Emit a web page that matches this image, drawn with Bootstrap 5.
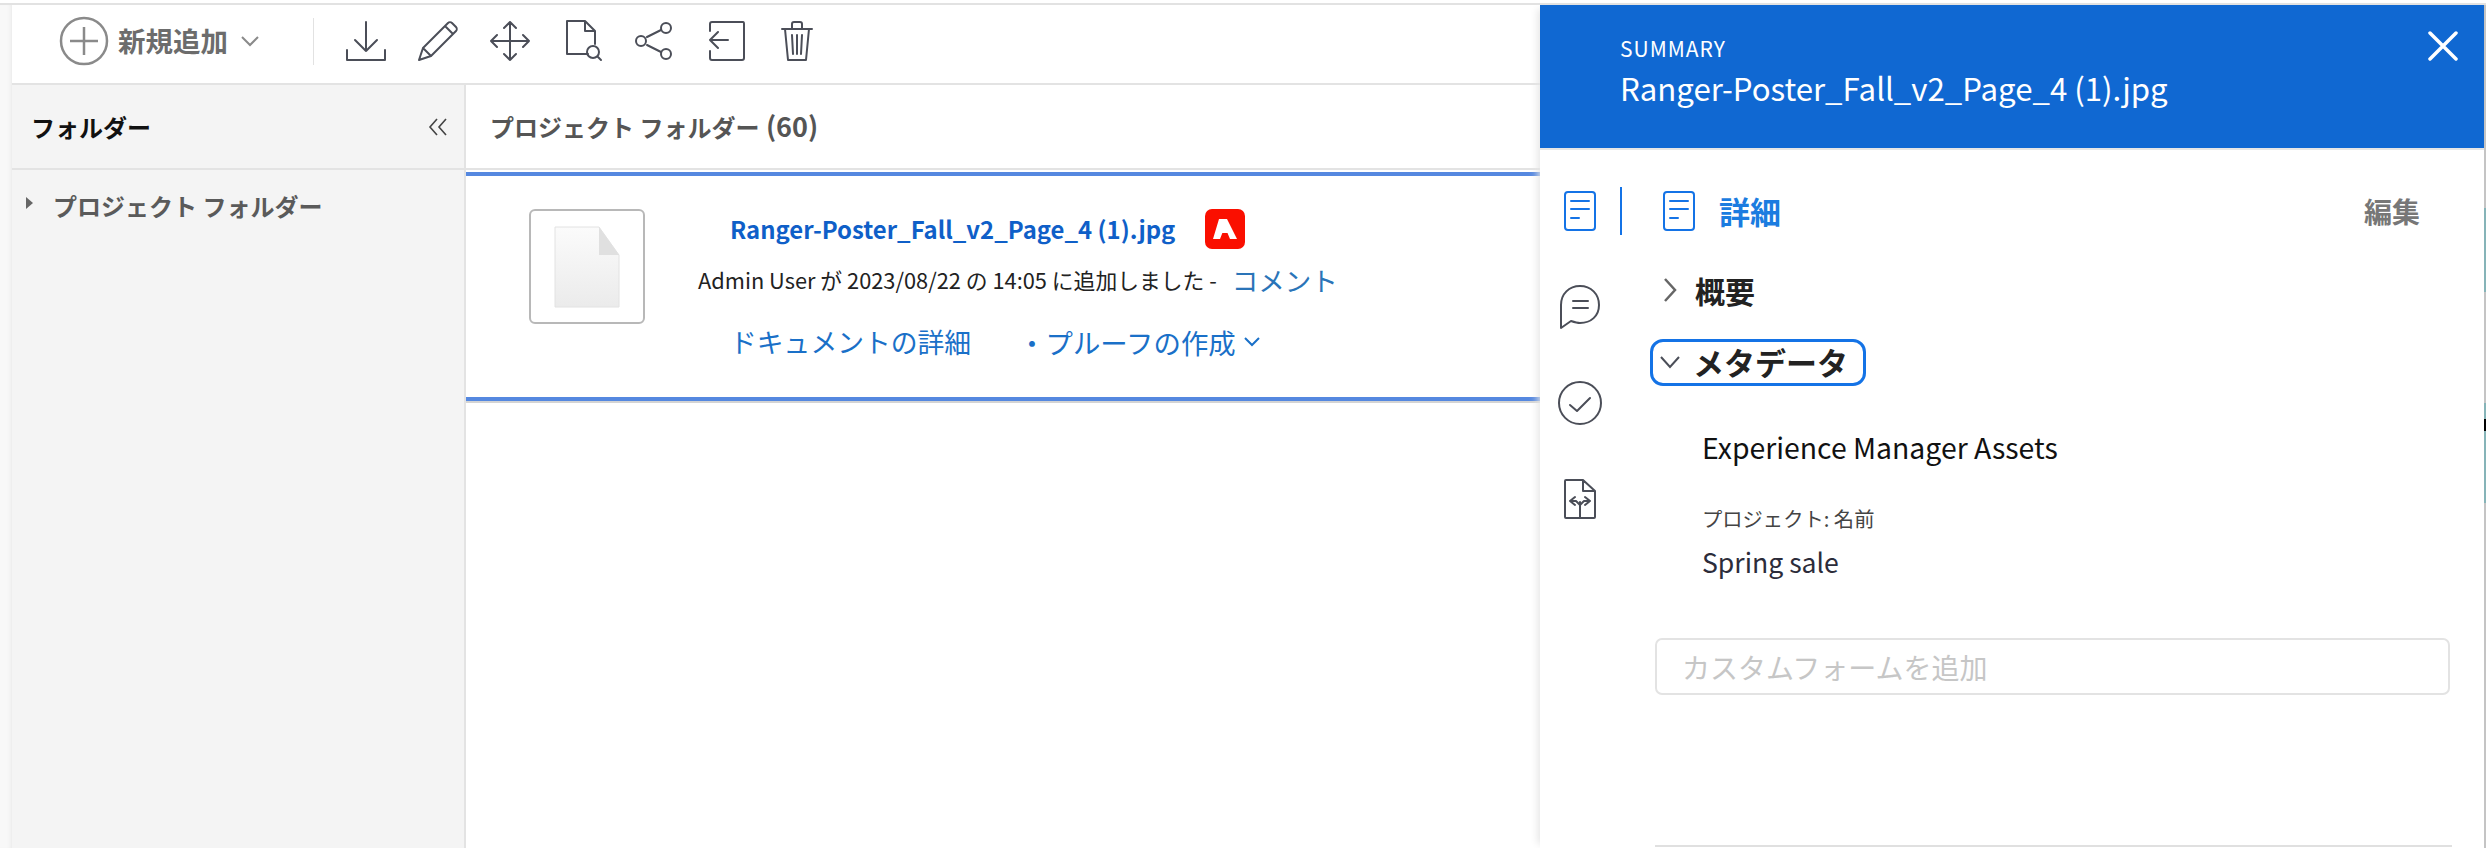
<!DOCTYPE html>
<html lang="ja">
<head>
    <meta charset="UTF-8">
    <title>Project Folder</title>
    <link href="https://cdn.jsdelivr.net/npm/bootstrap@5.3.1/dist/css/bootstrap.min.css" rel="stylesheet">
    <style>
        html, body { height: 848px; overflow: hidden; }
        body {
            background: #fff;
            font-family: "Noto Sans CJK JP", "Noto Sans", sans-serif;
            color: #2c2c2c;
        }
        a { text-decoration: none; }
        svg { display: block; flex: none; }
        .ln { fill: none; stroke: #4b4e58; stroke-width: 2; stroke-linecap: round; stroke-linejoin: round; }
        .ln-blue { fill: none; stroke: #1473e6; stroke-width: 2; stroke-linecap: round; stroke-linejoin: round; }

        .top-rule { height: 5px; padding-top: 3px; }
        .top-rule div { height: 2px; background: #e2e2e2; }
        .app-shell { height: 843px; }
        .edge-strip { width: 12px; background: #f8f8f8; box-shadow: inset -4px 0 4px -3px #e8e8e8; }
        .work-area { width: 1528px; }
        /* window behind the screenshot, just a sliver on the right */
        .right-sliver {
            width: 2px;
            flex: none;
            background: linear-gradient(#c4c4c4 203px, #86b4b8 203px, #86b4b8 287px, #c4c4c4 287px, #c4c4c4 398px, #86b4b8 398px, #86b4b8 414px, #000 414px, #000 426px, #86b4b8 426px, #86b4b8 498px, #c4c4c4 498px);
        }

        .tool-strip { height: 80px; border-bottom: 2px solid #e3e3e3; padding: 0 0 6px 47px; }
        .new-btn { color: #6c6c6c; font-size: 27.500px; font-weight: 700; line-height: 1; gap: 9px; }
        .tool-sep { width: 1px; height: 47px; background: #e2e2e2; margin: 0 32px 0 54px; }
        .tool-icons { gap: 32px; }
        .tool-wide { margin-left: 4px; }

        .folder-side { width: 454px; background: #f4f4f4; border-right: 2px solid #e3e3e3; flex: none; }
        .side-head { height: 85px; border-bottom: 2px solid #e3e3e3; padding: 0 16px 0 19px; font-size: 24px; font-weight: 700; color: #111; }
        .side-tree { padding: 21px 0 0 14px; font-size: 24px; font-weight: 700; color: #5a5a5a; gap: 20px; line-height: 30px; }
        .tree-caret { width: 0; height: 0; border-left: 7px solid #666; border-top: 6px solid transparent; border-bottom: 6px solid transparent; margin-top: 6px; }

        .main-head { height: 85px; padding-left: 24px; font-size: 24px; font-weight: 700; color: #555; border-bottom: 2px solid #e3e3e3; }
        .main-count { font-size: 27px; margin-left: 1px; }
        .doc-row { margin-top: 2px; height: 229px; border-top: 4px solid #5588e0; border-bottom: 4px solid #5588e0; padding: 33px 0 0 63px; box-shadow: 0 2px 0 #d4d4d4; }
        .thumb-box { width: 116px; height: 115px; border: 2px solid #b8b8b8; border-radius: 6px; }
        .doc-info { margin-left: 53px; }
        .doc-title { font-size: 23.900px; font-weight: 700; margin-left: 32px; height: 40px; gap: 30px; }
        .doc-title a { color: #0f5fc8; }
        .adobe-badge { width: 40px; height: 40px; background: #fa0f00; border-radius: 7px; }
        .doc-meta { font-size: 21.800px; color: #222; margin-top: 13px; height: 36px; gap: 15px; }
        .doc-meta a { font-size: 26.500px; color: #2a74b8; }
        .doc-actions { font-size: 26.800px; margin: 26px 0 0 32px; line-height: 36px; }
        .doc-actions a { color: #1a70c8; }
        .doc-actions .second-act { margin-left: 47px; gap: 8px; font-size: 27.400px; }
        .act-dot { margin-right: -8px; }

        .summary-panel { width: 944px; box-shadow: -6px 0 8px -4px #e4e4e4; z-index: 2; }
        .summary-head { height: 143px; background: #1068d2; color: #fff; padding: 26px 26px 0 80px; }
        .summary-label { font-size: 21px; letter-spacing: 1px; line-height: 34px; }
        .summary-name { font-size: 31.200px; line-height: 46px; }
        .summary-rule { height: 2px; background: #e6e6e6; }
        .rail-col { width: 80px; padding-top: 13px; flex: none; }
        .rail-item { width: 80px; height: 96px; }
        .rail-sep { width: 2px; height: 48px; background: #1473e6; margin-top: 37px; flex: none; }
        .detail-col { width: 862px; flex: none; padding-left: 33px; }
        .detail-head { width: 795px; height: 48px; margin-top: 37px; padding: 0 30px 0 7px; }
        .detail-title { font-size: 31px; font-weight: 700; color: #1b7ce0; margin-left: 23px; }
        .detail-edit { font-size: 28px; font-weight: 700; color: #777; }
        .acc-line { font-size: 30px; font-weight: 700; color: #222; line-height: 44px; }
        .acc-one { margin: 33px 0 0 8px; gap: 18px; }
        .acc-two { margin: 27px 0 0 -5px; width: 216px; height: 47px; border: 3px solid #1473e6; border-radius: 13px; padding: 0 0 2px 7px; gap: 13px; font-size: 31px; }
        .meta-block { padding: 41px 0 0 47px; }
        .meta-group { font-size: 28.400px; color: #111; line-height: 40px; }
        .meta-label { font-size: 20.300px; color: #444; line-height: 28px; margin-top: 37px; }
        .meta-value { font-size: 26.600px; color: #2c2c3a; line-height: 36px; margin-top: 12px; }
        .form-add { width: 795px; height: 57px; margin-top: 58px; border: 2px solid #e3e3e3; border-radius: 7px; padding-left: 25px; font-size: 28px; color: #c6c6c6; }
        .bottom-rule { width: 797px; height: 2px; background: #e0e0e0; margin-top: 150px; }
    </style>
</head>
<body>
<div class="top-rule"><div></div></div>
<div class="app-shell d-flex">
    <div class="edge-strip"></div>
    <div class="work-area d-flex flex-column">
        <div class="tool-strip d-flex align-items-center">
            <div class="new-btn d-flex align-items-center">
                <svg width="50" height="50" viewBox="0 0 50 50"><circle cx="25" cy="25" r="23" fill="none" stroke="#8a8a8a" stroke-width="2.5"/><path d="M25 11v28M11 25h28" fill="none" stroke="#8a8a8a" stroke-width="2.5"/></svg>
                <span>新規追加</span>
                <svg class="ms-1" width="18" height="11" viewBox="0 0 18 11"><path d="M1 1l8 8 8-8" fill="none" stroke="#8a8a8a" stroke-width="2"/></svg>
            </div>
            <div class="tool-sep"></div>
            <div class="tool-icons d-flex align-items-center">
                <svg width="40" height="40" viewBox="0 0 40 40"><path class="ln" d="M1 29v10h38V29M20 1v29M9 19l11 11 11-11"/></svg>
                <svg width="40" height="40" viewBox="0 0 40 40"><path class="ln" d="M1 39l4-12L30 2c1-1 3-1 4 0l4 4c1 1 1 3 0 4L13 35zM5 27l8 8M27 5l8 8"/></svg>
                <svg width="40" height="40" viewBox="0 0 40 40"><path class="ln" d="M20 1v38M1 20h38M14 7l6-6 6 6M14 33l6 6 6-6M7 14l-6 6 6 6M33 14l6 6-6 6"/></svg>
                <svg class="ms-1" width="37" height="42" viewBox="0 0 37 42"><path class="ln" d="M22 34H1V1h18l10 10v13M19 1v10h10"/><circle class="ln" cx="27" cy="32" r="6"/><path class="ln" d="M32 37l3 3"/></svg>
                <svg width="38" height="38" viewBox="0 0 38 38"><path class="ln" d="M12 15l14-7M12 23l14 7"/><circle class="ln" cx="6" cy="19" r="5"/><circle class="ln" cx="31" cy="6" r="5"/><circle class="ln" cx="31" cy="32" r="5"/></svg>
                <svg class="tool-wide" width="36" height="40" viewBox="0 0 36 40"><path class="ln" d="M1 10V3c0-1 1-2 2-2h31c1 0 1 1 1 2v34c0 1-1 2-2 2H3c-1 0-2-1-2-2v-7M1 19h18M9 11l-8 8 8 8"/></svg>
                <svg class="tool-wide" width="32" height="40" viewBox="0 0 32 40"><path class="ln" d="M1 8h30M4 8l3 31h18l3-31M11 8V3c0-1 1-2 2-2h6c1 0 2 1 2 2v5M11 14l1 19M16 14v19M21 14l-1 19"/></svg>
            </div>
        </div>
        <div class="d-flex flex-grow-1">
            <div class="folder-side">
                <div class="side-head d-flex align-items-center justify-content-between">
                    <span>フォルダー</span>
                    <svg width="20" height="18" viewBox="0 0 20 18"><path d="M9 1L2 9l7 8M18 1l-7 8 7 8" fill="none" stroke="#444" stroke-width="1.6"/></svg>
                </div>
                <div class="side-tree d-flex">
                    <span class="tree-caret"></span>
                    <span>プロジェクト フォルダー</span>
                </div>
            </div>
            <div class="flex-grow-1">
                <div class="main-head d-flex align-items-center"><span>プロジェクト フォルダー <span class="main-count">(60)</span></span></div>
                <div class="doc-row d-flex">
                    <div class="thumb-box d-flex align-items-center justify-content-center">
                        <svg width="66" height="82" viewBox="0 0 66 82">
                            <defs><linearGradient id="pg" x1="0" y1="0" x2="0" y2="1"><stop offset="0" stop-color="#fbfbfb"/><stop offset="1" stop-color="#ebebeb"/></linearGradient></defs>
                            <path d="M1 1h44l20 28v52H1z" fill="url(#pg)" stroke="#e2e2e2"/><path d="M45 1l20 28H45z" fill="#e0e0e0"/>
                        </svg>
                    </div>
                    <div class="doc-info">
                        <div class="doc-title d-flex align-items-center">
                            <a href="#">Ranger-Poster_Fall_v2_Page_4 (1).jpg</a>
                            <span class="adobe-badge d-flex align-items-center justify-content-center">
                                <svg width="40" height="40" viewBox="0 0 40 40"><path d="M14 10h8l10 20h-7l-2.500-6H17l3.500-8L15 30H8z" fill="#fff"/></svg>
                            </span>
                        </div>
                        <div class="doc-meta d-flex align-items-center">
                            <span>Admin User が 2023/08/22 の 14:05 に追加しました -</span>
                            <a href="#">コメント</a>
                        </div>
                        <div class="doc-actions d-flex align-items-center">
                            <a href="#">ドキュメントの詳細</a>
                            <a href="#" class="second-act d-flex align-items-center">
                                <span class="act-dot">・</span><span>プルーフの作成</span>
                                <svg width="16" height="10" viewBox="0 0 16 10"><path d="M1 1l7 7 7-7" fill="none" stroke="#1a70c8" stroke-width="2"/></svg>
                            </a>
                        </div>
                    </div>
                </div>
            </div>
        </div>
    </div>
    <div class="summary-panel bg-white d-flex flex-column">
        <div class="summary-head d-flex justify-content-between">
            <div>
                <div class="summary-label">SUMMARY</div>
                <div class="summary-name">Ranger-Poster_Fall_v2_Page_4 (1).jpg</div>
            </div>
            <svg width="30" height="30" viewBox="0 0 30 30"><path d="M2 2l26 26M28 2L2 28" fill="none" stroke="#fff" stroke-width="3.500" stroke-linecap="round"/></svg>
        </div>
        <div class="summary-rule"></div>
        <div class="d-flex flex-grow-1">
            <div class="rail-col">
                <div class="rail-item d-flex align-items-center justify-content-center">
                    <svg width="34" height="42" viewBox="0 0 34 42"><rect class="ln-blue" x="2" y="2" width="30" height="38" rx="3"/><path class="ln-blue" d="M8 11h18M8 19h18M8 28h8"/></svg>
                </div>
                <div class="rail-item d-flex align-items-center justify-content-center">
                    <svg width="42" height="46" viewBox="0 0 42 46"><path class="ln" d="M2 44V21C2 10 10 2 21 2s19 8 19 19-8 18-19 18c-3 0-6-1-9-2z"/><path class="ln" d="M14 17h15M14 24h15"/></svg>
                </div>
                <div class="rail-item d-flex align-items-center justify-content-center">
                    <svg width="44" height="44" viewBox="0 0 44 44"><circle class="ln" cx="22" cy="22" r="21"/><path class="ln" d="M12 24l7 6 13-13"/></svg>
                </div>
                <div class="rail-item d-flex align-items-center justify-content-center">
                    <svg width="34" height="42" viewBox="0 0 34 42"><path class="ln" d="M20 2H3c-1 0-1 1-1 1v36c0 1 1 1 1 1h28c1 0 1-1 1-1V13zM20 2v11h12M17 39V24M12 19l-5 4 5 4M22 19l5 4-5 4M7 23h6l4 4 4-4h6"/></svg>
                </div>
            </div>
            <div class="rail-sep"></div>
            <div class="detail-col">
                <div class="detail-head d-flex align-items-center justify-content-between">
                    <div class="d-flex align-items-center">
                        <svg width="34" height="42" viewBox="0 0 34 42"><rect class="ln-blue" x="2" y="2" width="30" height="38" rx="3"/><path class="ln-blue" d="M8 11h18M8 19h18M8 28h8"/></svg>
                        <span class="detail-title">詳細</span>
                    </div>
                    <span class="detail-edit">編集</span>
                </div>
                <div class="acc-line acc-one d-flex align-items-center">
                    <svg width="14" height="26" viewBox="0 0 14 26"><path d="M2 2l10 11L2 24" fill="none" stroke="#666" stroke-width="2.500"/></svg>
                    <span>概要</span>
                </div>
                <div class="acc-line acc-two d-flex align-items-center">
                    <svg width="20" height="14" viewBox="0 0 20 14"><path d="M1 2l9 10 9-10" fill="none" stroke="#4b4e58" stroke-width="2"/></svg>
                    <span>メタデータ</span>
                </div>
                <div class="meta-block">
                    <div class="meta-group">Experience Manager Assets</div>
                    <div class="meta-label">プロジェクト: 名前</div>
                    <div class="meta-value">Spring sale</div>
                </div>
                <div class="form-add d-flex align-items-center">カスタムフォームを追加</div>
                <div class="bottom-rule"></div>
            </div>
        </div>
    </div>
    <div class="right-sliver"></div>
</div>
<script src="https://cdn.jsdelivr.net/npm/bootstrap@5.3.1/dist/js/bootstrap.bundle.min.js"></script>
</body>
</html>
